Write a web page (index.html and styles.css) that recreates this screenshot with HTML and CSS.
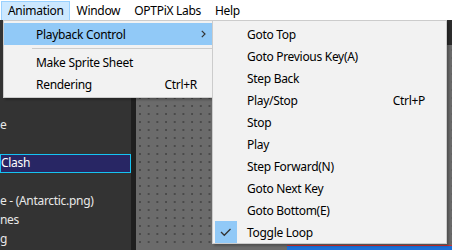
FILE: index.html
```html
<!DOCTYPE html>
<html lang="en">
<head>
    <meta charset="UTF-8">
    <title>OPTPiX - Animation menu</title>
    <link rel="stylesheet" href="styles.css">
</head>
<body>
    <div class="app">
        <header class="menubar">
            <span class="menubar-item active">Animation</span>
            <span class="menubar-item">Window</span>
            <span class="menubar-item">OPTPiX Labs</span>
            <span class="menubar-item">Help</span>
        </header>

        <div class="workspace">
            <aside class="layers">
                <div class="layer-row">e</div>
                <div class="layer-row"></div>
                <div class="layer-row selected">Clash</div>
                <div class="layer-row"></div>
                <div class="layer-row">e - (Antarctic.png)</div>
                <div class="layer-row">nes</div>
                <div class="layer-row">g</div>
            </aside>
            <div class="divider"></div>
            <main class="canvas">
                <div class="canvas-toolbar"></div>
                <div class="canvas-stage"></div>
                <div class="timeline"></div>
            </main>
        </div>

        <!-- Animation dropdown -->
        <div class="menu menu-main">
            <div class="menu-item hover">
                <span class="check"></span>
                <span class="label">Playback Control</span>
                <span class="shortcut"></span>
                <span class="arrow">
                    <svg width="5" height="8" viewBox="0 0 5 8"><polyline points="0.8,0.8 4,4 0.8,7.2" fill="none" stroke="#333" stroke-width="1.2"/></svg>
                </span>
            </div>
            <div class="separator"></div>
            <div class="menu-item">
                <span class="check"></span>
                <span class="label">Make Sprite Sheet</span>
                <span class="shortcut"></span>
                <span class="arrow"></span>
            </div>
            <div class="menu-item">
                <span class="check"></span>
                <span class="label">Rendering</span>
                <span class="shortcut">Ctrl+R</span>
                <span class="arrow"></span>
            </div>
        </div>

        <!-- Playback Control submenu -->
        <div class="menu menu-sub">
            <div class="menu-item"><span class="check"></span><span class="label">Goto Top</span></div>
            <div class="menu-item"><span class="check"></span><span class="label">Goto Previous Key(A)</span></div>
            <div class="menu-item"><span class="check"></span><span class="label">Step Back</span></div>
            <div class="menu-item"><span class="check"></span><span class="label">Play/Stop</span><span class="shortcut">Ctrl+P</span></div>
            <div class="menu-item"><span class="check"></span><span class="label">Stop</span></div>
            <div class="menu-item"><span class="check"></span><span class="label">Play</span></div>
            <div class="menu-item"><span class="check"></span><span class="label">Step Forward(N)</span></div>
            <div class="menu-item"><span class="check"></span><span class="label">Goto Next Key</span></div>
            <div class="menu-item"><span class="check"></span><span class="label">Goto Bottom(E)</span></div>
            <div class="menu-item">
                <span class="check checked">
                    <svg width="22" height="22" viewBox="0 0 22 22"><polyline points="6,11 9.3,14.3 15.5,8" fill="none" stroke="#333" stroke-width="1.3"/></svg>
                </span>
                <span class="label">Toggle Loop</span>
            </div>
        </div>
    </div>
</body>
</html>
```

FILE: styles.css
```css
body {
    margin: 0;
    padding: 0;
    font-family: 'Noto Sans', 'Open Sans', sans-serif;
    font-size: 12px;
    letter-spacing: -0.3px;
    background: #333;
    overflow: hidden;
}

.app {
    position: relative;
    width: 452px;
    height: 250px;
    display: flex;
    flex-direction: column;
}

/* menu bar */
.menubar {
    height: 20px;
    background: #fff;
    display: flex;
    align-items: flex-start;
    padding-left: 1px;
    box-sizing: border-box;
}

.menubar-item {
    height: 18px;
    line-height: 17px;
    margin-top: 1px;
    padding: 0 6px;
    border: 1px solid transparent;
    color: #000;
}

.menubar-item.active {
    background: #cce8ff;
    border-color: #99d1ff;
    padding-right: 5px;
}

/* app behind the menus */
.workspace {
    flex: 1;
    display: flex;
    min-height: 0;
}

.layers {
    width: 131px;
    background: #333;
    color: #e8e8e8;
    padding-top: 96px;
}

.layer-row {
    height: 19px;
    line-height: 18px;
    white-space: nowrap;
    box-sizing: border-box;
}

.layer-row.selected {
    background: #282664;
    border: 1px solid #16c3f2;
    color: #fff;
    line-height: 16px;
}

.divider {
    width: 5px;
    background: #1f1f1f;
}

.canvas {
    flex: 1;
    display: flex;
    flex-direction: column;
    background-color: #6b6b6b;
}

.canvas-toolbar {
    height: 25px;
    background: #2c2c2c;
}

.canvas-stage {
    flex: 1;
    background-image: radial-gradient(circle at 1px 1px, #4a4a4a 1.1px, transparent 1.3px);
    background-size: 8.7px 8px;
    background-position: 3px 4px;
}

.timeline {
    height: 4px;
    margin-left: 151px;
    background: #1c6fd6;
    border-top: 1px solid #d83030;
}

/* popup menus */
.menu {
    position: absolute;
    top: 20px;
    background: #f2f2f2;
    border: 1px solid #cccccc;
    padding: 2px 0;
    box-shadow: 2px 2px 2px rgba(0, 0, 0, 0.25);
    color: #000;
}

.menu-main {
    left: 3px;
    width: 208px;
}

.menu-sub {
    left: 212px;
    width: 233px;
    padding-bottom: 0;
}

.menu-item {
    height: 22px;
    line-height: 21px;
    display: flex;
    align-items: center;
    white-space: nowrap;
}

.menu-item.hover {
    background: #91c9f7;
}

.check {
    width: 22px;
    height: 22px;
    margin-left: 2px;
    margin-right: 8px;
    display: flex;
}

.menu-sub .check {
    margin-right: 10px;
}

.check.checked {
    background: #91c9f7;
}

.label {
    flex: 1;
}

.menu-sub .shortcut {
    padding-right: 21px;
}

.arrow {
    width: 15px;
    display: flex;
    align-items: center;
}

.arrow svg {
    margin-left: 4px;
}

.separator {
    height: 1px;
    background: #cccccc;
    margin: 3px 0 2px 28px;
}
```
